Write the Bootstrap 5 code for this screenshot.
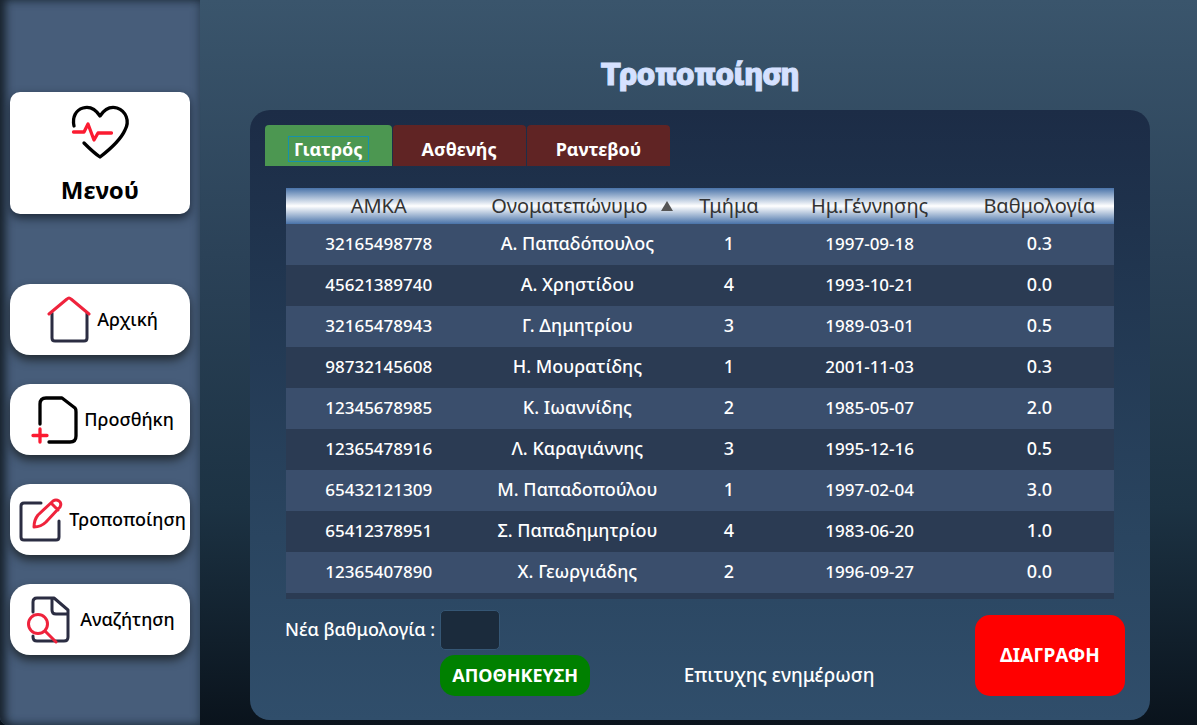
<!DOCTYPE html>
<html lang="el">
<head>
<meta charset="utf-8">
<meta name="viewport" content="width=device-width, initial-scale=1">
<title>Τροποποίηση</title>
<link href="https://cdn.jsdelivr.net/npm/bootstrap@5.3.0/dist/css/bootstrap.min.css" rel="stylesheet">
<style>
  body { font-family: "Noto Sans", sans-serif; font-size: 18px; line-height: 24px; font-weight: 500; color: #fff; background: linear-gradient(#3a556c 0%, #2b4258 35%, #1c3243 70%, #0a131c 100%); background-attachment: fixed; }
  .side-panel { width: 200px; flex: none; padding: 92px 10px 16px; background: #475d7a; box-shadow: inset 8px 0 10px -3px #19232e, inset 0 0 10px #26384a; border-radius: 0 0 0 8px; }
  .menu-tile { height: 122px; padding: 8px 0; border-radius: 10px; box-shadow: 0 4px 10px #1d2938; font-weight: 700; font-size: 24px; line-height: 32px; color: #000; background: #fff; }
  .side-links { margin-top: 70px; gap: 29px; }
  .side-btn { height: 71px; padding: 0 0 0 5px; border: 0; border-radius: 20px; background: #fff; color: #000; box-shadow: 0 5px 10px #222b33; font-size: 18px; font-weight: 500; gap: 6px; }
  .side-btn:hover { background: #f1f4f9; color: #000; }
  .content-area { padding: 50px 47px 5px 50px; }
  .page-title { font-family: Roboto, sans-serif; font-weight: 900; font-size: 32px; line-height: 48px; color: #d5e1ff; -webkit-text-stroke: 1px #d5e1ff; margin: 0 0 12px; }
  .panel { border-radius: 20px; padding: 15px 25px 24px 15px; background: linear-gradient(#1c2c46, #1f334d 20%, #2a4560 70%, #304e6b); }
  .tab-strip { gap: 1px; }
  .tab-strip .nav-link { height: 41px; padding: 0 28px; border: 0; border-radius: 4px 4px 0 0; background: #602424; color: #fff; font-weight: 700; }
  .tab-strip .nav-link.active { padding: 0 23px; background: #4c9751; color: #fff; }
  .tab-text { display: block; border: 1px solid transparent; line-height: 24px; margin-top: 6px; }
  .active .tab-text { border-color: #1591ac; padding: 0 5px; }
  .table-box { margin: 22px 11px 0 21px; border-bottom: 6px solid #2b3b53; }
  .doctors { --bs-table-bg: transparent; margin: 0; table-layout: fixed; color: #fff; text-align: center; }
  .doctors th, .doctors td { padding: 0; border: 0; vertical-align: middle; white-space: nowrap; }
  .doctors thead tr { height: 36px; background: linear-gradient(#4973a9, #fff 50%, #4973a9); }
  .doctors th { color: #333; font-size: 20px; line-height: 36px; font-weight: 400; }
  .doctors .c-name { padding-left: 9px; }
  .doctors td { height: 41px; line-height: 39px; padding-bottom: 2px; color: #fff; }
  .doctors td:first-child, .doctors td:nth-child(4) { font-size: 17px; }
  .doctors tbody tr { background: #2b3b53; }
  .doctors tbody tr:nth-child(odd) { background: #3a4e6c; }
  .c-id { width: 22.4%; } .c-name { width: 25.6%; } .c-dept { width: 11%; } .c-date { width: 23%; }
  .sort-mark { width: 12px; height: 10px; margin: 0 0 3px 8px; }
  .actions { margin: 11px 0 0 20px; }
  .edit-form { display: grid; grid-template-columns: auto 60px 90px; column-gap: 5px; row-gap: 5px; }
  .edit-form label { padding-bottom: 2px; }
  .grade-box { height: 40px; background: #1b2b3c; border: 1px solid #355674; border-radius: 5px; color: #fff; }
  .save-btn { grid-column: 2 / 4; width: 150px; height: 41px; padding: 0; border: 0; border-radius: 15px; background: #008000; color: #fff; font-weight: 700; font-size: 18px; }
  .delete-btn { width: 150px; height: 81px; border: 0; border-radius: 15px; background: #f00; color: #fff; font-weight: 700; font-size: 19px; }
  .save-btn:hover { background: #076c07; color: #fff; } .delete-btn:hover { background: #d80000; color: #fff; }
  .status-text { font-size: 19px; margin: 0 12px 9px 0; }
  svg { fill: none; stroke-linecap: round; stroke-linejoin: round; flex: none; }
</style>
</head>
<body>
<div class="d-flex min-vh-100">
  <aside class="side-panel">
    <div class="menu-tile d-flex flex-column align-items-center justify-content-between">
      <svg width="64" height="64" viewBox="0 0 64 64" stroke="#000" stroke-width="3.3">
        <path d="M6 26C4 17 8 10 15 8c7-2 13 2 17 8 4-6 10-10 17-8 9 3 13 13 8 22-4 9-12 17-25 27-6-4-11-9-16-14"/>
        <path stroke="#fb1b31" d="M5.500 32H16l4-8 6 16 4-7h13.500"/>
      </svg>
      <span>Μενού</span>
    </div>
    <nav class="side-links d-flex flex-column" aria-label="Μενού">
      <button type="button" class="side-btn btn d-flex align-items-center justify-content-center">
        <svg width="44" height="48" viewBox="0 0 44 48" stroke="#2b2d42" stroke-width="3"><path d="M5 17v25q0 3 3 3h29q3 0 3-3V17"/><path stroke="#ef233c" d="M2 18 20 3q2-2 4 0l18 15"/></svg>
        <span>Αρχική</span>
      </button>
      <button type="button" class="side-btn btn d-flex align-items-center justify-content-center">
        <svg width="47" height="48" viewBox="0 0 47 48" stroke="#000" stroke-width="3.300"><path d="M9 28V8q0-6 6-6h16l13 10q1 1 1 4v24q0 6-6 6H18"/><path stroke="#fb1b31" d="M2 39.500h14M9 33v13"/></svg>
        <span>Προσθήκη</span>
      </button>
      <button type="button" class="side-btn btn d-flex align-items-center justify-content-center">
        <svg width="44" height="46" viewBox="0 0 44 46" stroke="#2b2d42" stroke-width="3"><path d="M22 6H5Q2 6 2 9v31q0 3 3 3h32q3 0 3-3V24"/><path stroke="#ef233c" d="M15 30q0-7 4-12L34 4q3-2 6 0t1 6L27 25q-5 5-12 5zM32 6l7 7"/></svg>
        <span>Τροποποίηση</span>
      </button>
      <button type="button" class="side-btn btn d-flex align-items-center justify-content-center">
        <svg width="44" height="48" viewBox="0 0 44 48" stroke="#2b2d42" stroke-width="3"><path d="M7 16V6q0-4 4-4h17l14 12v27q0 4-4 4H11q-4 0-4-4v-1M26 3v11q0 4 4 4h12"/><g stroke="#ef233c"><circle cx="12" cy="28" r="9.5"/><path d="m19 35 11 11"/></g></svg>
        <span class="ms-1 me-1">Αναζήτηση</span>
      </button>
    </nav>
  </aside>

  <main class="content-area flex-grow-1">
    <h1 class="page-title text-center">Τροποποίηση</h1>
    <section class="panel">
      <div class="tab-strip nav" role="tablist">
        <button type="button" class="nav-link active" role="tab" aria-selected="true"><span class="tab-text">Γιατρός</span></button>
        <button type="button" class="nav-link" role="tab" aria-selected="false"><span class="tab-text">Ασθενής</span></button>
        <button type="button" class="nav-link" role="tab" aria-selected="false"><span class="tab-text">Ραντεβού</span></button>
      </div>
      <div class="table-box">
        <table class="table doctors">
          <thead><tr>
            <th class="c-id" scope="col">ΑΜΚΑ</th>
            <th class="c-name" scope="col">Ονοματεπώνυμο <svg class="sort-mark" viewBox="0 0 12 10"><path fill="#555" d="M6 0 12 10H0z"/></svg></th>
            <th class="c-dept" scope="col">Τμήμα</th>
            <th class="c-date" scope="col">Ημ.Γέννησης</th>
            <th scope="col">Βαθμολογία</th>
          </tr></thead>
          <tbody>
            <tr><td>32165498778</td><td>Α. Παπαδόπουλος</td><td>1</td><td>1997-09-18</td><td>0.3</td></tr>
            <tr><td>45621389740</td><td>Α. Χρηστίδου</td><td>4</td><td>1993-10-21</td><td>0.0</td></tr>
            <tr><td>32165478943</td><td>Γ. Δημητρίου</td><td>3</td><td>1989-03-01</td><td>0.5</td></tr>
            <tr><td>98732145608</td><td>Η. Μουρατίδης</td><td>1</td><td>2001-11-03</td><td>0.3</td></tr>
            <tr><td>12345678985</td><td>Κ. Ιωαννίδης</td><td>2</td><td>1985-05-07</td><td>2.0</td></tr>
            <tr><td>12365478916</td><td>Λ. Καραγιάννης</td><td>3</td><td>1995-12-16</td><td>0.5</td></tr>
            <tr><td>65432121309</td><td>Μ. Παπαδοπούλου</td><td>1</td><td>1997-02-04</td><td>3.0</td></tr>
            <tr><td>65412378951</td><td>Σ. Παπαδημητρίου</td><td>4</td><td>1983-06-20</td><td>1.0</td></tr>
            <tr><td>12365407890</td><td>Χ. Γεωργιάδης</td><td>2</td><td>1996-09-27</td><td>0.0</td></tr>
          </tbody>
        </table>
      </div>
      <div class="actions d-flex align-items-end justify-content-between">
        <form class="edit-form align-items-center">
          <label for="grade">Νέα βαθμολογία :</label>
          <input id="grade" type="text" class="grade-box form-control p-1">
          <button type="button" class="save-btn btn">ΑΠΟΘΗΚΕΥΣΗ</button>
        </form>
        <span class="status-text">Επιτυχης ενημέρωση</span>
        <button type="button" class="delete-btn btn">ΔΙΑΓΡΑΦΗ</button>
      </div>
    </section>
  </main>
</div>
<script src="https://cdn.jsdelivr.net/npm/bootstrap@5.3.0/dist/js/bootstrap.bundle.min.js"></script>
</body>
</html>
